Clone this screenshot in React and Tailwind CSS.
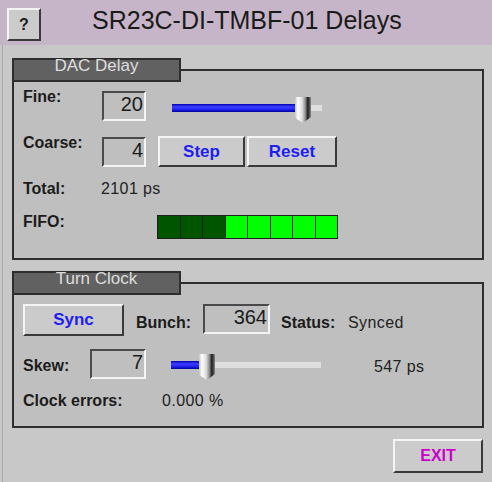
import { useId } from 'react'

const raised =
  'border-2 border-t-[#f4f4f4] border-l-[#f4f4f4] border-b-[#3a3a3a] border-r-[#3a3a3a] bg-[#cbcbcb]'
const sunken =
  'border-2 border-t-[#4a4a4a] border-l-[#4a4a4a] border-b-[#f4f4f4] border-r-[#f4f4f4] bg-[#bfbfbf]'
const label = 'text-[16px] leading-[18px] font-bold text-[#1c1c1c]'
const value = 'text-[16px] leading-[18px] tracking-[0.4px] text-[#222]'

function Slider({ pos }) {
  const id = useId().replace(/:/g, '')
  return (
    <svg width="151" height="27" viewBox="0 0 151 27">
      <defs>
        <linearGradient id={`b${id}`} x1="0" y1="0" x2="0" y2="1">
          <stop offset="0" stopColor="#0000b0" />
          <stop offset="0.35" stopColor="#3c3cff" />
          <stop offset="0.6" stopColor="#2a2aff" />
          <stop offset="1" stopColor="#0000a0" />
        </linearGradient>
        <linearGradient id={`t${id}`} x1="0" y1="0" x2="1" y2="0">
          <stop offset="0" stopColor="#c4c4c4" />
          <stop offset="0.18" stopColor="#ffffff" />
          <stop offset="0.45" stopColor="#dcdcdc" />
          <stop offset="0.65" stopColor="#8c8c8c" />
          <stop offset="0.8" stopColor="#1e1e1e" />
          <stop offset="0.92" stopColor="#555" />
          <stop offset="1" stopColor="#8a8a8a" />
        </linearGradient>
      </defs>
      <rect x={pos} y="8" width={150 - pos} height="6" fill="#dedede" />
      <rect x="0" y="7" width={pos + 2} height="8" fill={`url(#b${id})`} />
      <g transform={`translate(${pos} 0)`}>
        <path d="M1 0 H15 Q16 0 16 1 V20 L8 26 L0 21 V1 Q0 0 1 0 Z" fill={`url(#t${id})`} />
      </g>
    </svg>
  )
}

function Panel({ title, height, children }) {
  return (
    <div className="ml-[9px] mr-[8px]">
      <div className="flex items-end h-[24px]">
        <div className="w-[169px] h-[24px] border-2 border-[#2e2e2e] bg-[#616161] text-center text-[17px] leading-[12px] text-[#dedede]">
          {title}
        </div>
        <div className="flex-1 h-[13px] border-t-2 border-r-2 border-[#2e2e2e] bg-[#bfbfbf]" />
      </div>
      <div
        className="border-l-2 border-r-2 border-b-2 border-[#2e2e2e] bg-[#bfbfbf]"
        style={{ height }}
      >
        {children}
      </div>
    </div>
  )
}

export default function App() {
  const fifo = [1, 1, 1, 0, 0, 0, 0, 0]
  return (
    <div
      className="w-[492px] h-[482px] bg-[#c8c8c8] overflow-hidden"
      style={{ fontFamily: '"Liberation Sans", Arial, sans-serif' }}
    >
      {/* header */}
      <div className="h-[45px] bg-[#c6b5c8] flex items-start">
        <button
          className={`${raised} ml-[7px] mt-[8px] w-[34px] h-[33px] text-[16px] font-bold text-[#1c1c1c] flex items-center justify-center`}
        >
          ?
        </button>
        <div className="ml-[51px] mt-[5px] text-[25px] leading-[30px] text-[#1a1a1a]">
          SR23C-DI-TMBF-01 Delays
        </div>
      </div>

      <div className="ml-[2px] border-l border-[#a8a8a8] h-[437px] flex flex-col pt-[13px]">
        <Panel title="DAC Delay" height={178}>
          <div className="pt-[6px]">
            <div className="flex items-start h-[46px]">
              <div className={`${label} w-[88px] pl-[9px]`}>Fine:</div>
              <div className={`${sunken} w-[44px] h-[30px] mt-[3px] text-right pr-px text-[20px] leading-[22px] text-[#1c1c1c]`}>
                20
              </div>
              <div className="ml-[26px] mt-[9px] flex">
                <Slider pos={123} />
              </div>
            </div>
            <div className="flex items-start h-[46px]">
              <div className={`${label} w-[88px] pl-[9px]`}>Coarse:</div>
              <div className={`${sunken} w-[44px] h-[30px] mt-[3px] text-right pr-px text-[20px] leading-[22px] text-[#1c1c1c]`}>
                4
              </div>
              <button className={`${raised} ml-[12px] mt-[2px] w-[87px] h-[31px] text-[17px] font-bold text-[#1e1ef0]`}>
                Step
              </button>
              <button className={`${raised} ml-[2px] mt-[2px] w-[90px] h-[31px] text-[17px] font-bold text-[#1e1ef0]`}>
                Reset
              </button>
            </div>
            <div className="flex items-start h-[33px]">
              <div className={`${label} w-[87px] pl-[9px]`}>Total:</div>
              <div className={value}>2101 ps</div>
            </div>
            <div className="flex items-start">
              <div className={`${label} w-[143px] pl-[9px]`}>FIFO:</div>
              <div className="mt-[2px] w-[181px] h-[24px] flex border border-[#1e1e1e]">
                {fifo.map((d, i) => (
                  <div
                    key={i}
                    className={`flex-1 ${i > 0 ? 'border-l border-[#1e1e1e]' : ''} ${d ? 'bg-[#005500]' : 'bg-[#00ff00]'}`}
                  />
                ))}
              </div>
            </div>
          </div>
        </Panel>

        <div className="mt-[11px]">
          <Panel title="Turn Clock" height={133}>
            <div className="pt-[9px]">
              <div className="flex items-start h-[32px]">
                <button className={`${raised} ml-[9px] w-[101px] h-[32px] text-[17px] font-bold text-[#1e1ef0]`}>
                  Sync
                </button>
                <div className={`${label} ml-[12px] mt-[10px] w-[67px]`}>Bunch:</div>
                <div className={`${sunken} w-[67px] h-[30px] text-right pr-px text-[20px] leading-[22px] text-[#1c1c1c]`}>
                  364
                </div>
                <div className={`${label} ml-[11px] mt-[10px] w-[67px]`}>Status:</div>
                <div className={`${value} mt-[10px]`}>Synced</div>
              </div>
              <div className="flex items-start h-[31px] mt-[13px]">
                <div className={`${label} w-[76px] pl-[9px] mt-[8px]`}>Skew:</div>
                <div className={`${sunken} w-[56px] h-[30px] text-right pr-px text-[20px] leading-[22px] text-[#1c1c1c]`}>
                  7
                </div>
                <div className="ml-[25px] mt-[5px] flex">
                  <Slider pos={28} />
                </div>
                <div className={`${value} ml-[52px] mt-[9px]`}>547 ps</div>
              </div>
              <div className="flex items-start mt-[12px]">
                <div className={`${label} w-[148px] pl-[9px]`}>Clock errors:</div>
                <div className={value}>0.000 %</div>
              </div>
            </div>
          </Panel>
        </div>

        <div className="flex justify-end mr-[9px] mt-[11px]">
          <button className={`${raised} w-[90px] h-[34px] text-[16px] font-bold text-[#cc00cc]`}>
            EXIT
          </button>
        </div>
      </div>
    </div>
  )
}
